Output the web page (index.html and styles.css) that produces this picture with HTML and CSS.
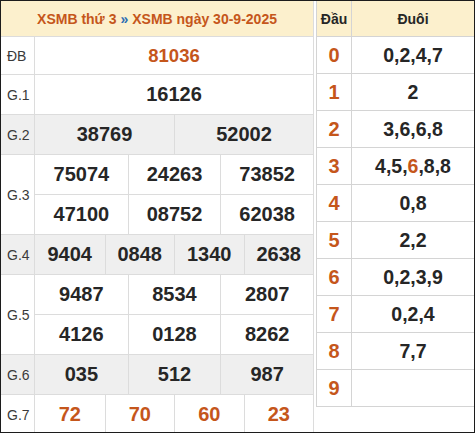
FILE: index.html
```html
<!DOCTYPE html>
<html lang="vi">
<head>
<meta charset="utf-8">
<title>XSMB</title>
<link rel="stylesheet" href="styles.css">
</head>
<body>
<div class="frame">
  <div class="results">
    <div class="res-head"><span class="or">XSMB thứ 3</span> <span class="raquo">»</span> <span class="or">XSMB ngày 30-9-2025</span></div>
    <div class="row r-db">
      <div class="lbl">ĐB</div>
      <div class="cells c1"><div class="cell num special">81036</div></div>
    </div>
    <div class="row">
      <div class="lbl">G.1</div>
      <div class="cells c1"><div class="cell num">16126</div></div>
    </div>
    <div class="row alt">
      <div class="lbl">G.2</div>
      <div class="cells c2"><div class="cell num">38769</div><div class="cell num">52002</div></div>
    </div>
    <div class="row double">
      <div class="lbl">G.3</div>
      <div class="cells c3">
        <div class="cell num">75074</div><div class="cell num">24263</div><div class="cell num">73852</div>
        <div class="cell num">47100</div><div class="cell num">08752</div><div class="cell num">62038</div>
      </div>
    </div>
    <div class="row alt">
      <div class="lbl">G.4</div>
      <div class="cells c4"><div class="cell num">9404</div><div class="cell num">0848</div><div class="cell num">1340</div><div class="cell num">2638</div></div>
    </div>
    <div class="row double">
      <div class="lbl">G.5</div>
      <div class="cells c3">
        <div class="cell num">9487</div><div class="cell num">8534</div><div class="cell num">2807</div>
        <div class="cell num">4126</div><div class="cell num">0128</div><div class="cell num">8262</div>
      </div>
    </div>
    <div class="row alt">
      <div class="lbl">G.6</div>
      <div class="cells c3"><div class="cell num">035</div><div class="cell num">512</div><div class="cell num">987</div></div>
    </div>
    <div class="row">
      <div class="lbl">G.7</div>
      <div class="cells c4"><div class="cell num or">72</div><div class="cell num or">70</div><div class="cell num or">60</div><div class="cell num or">23</div></div>
    </div>
  </div>
  <div class="loto">
    <div class="lrow lhead"><div class="dau">Đầu</div><div class="duoi">Đuôi</div></div>
    <div class="lrow"><div class="dau">0</div><div class="duoi">0,2,4,7</div></div>
    <div class="lrow"><div class="dau">1</div><div class="duoi">2</div></div>
    <div class="lrow"><div class="dau">2</div><div class="duoi">3,6,6,8</div></div>
    <div class="lrow"><div class="dau">3</div><div class="duoi">4,5,<span class="or">6</span>,8,8</div></div>
    <div class="lrow"><div class="dau">4</div><div class="duoi">0,8</div></div>
    <div class="lrow"><div class="dau">5</div><div class="duoi">2,2</div></div>
    <div class="lrow"><div class="dau">6</div><div class="duoi">0,2,3,9</div></div>
    <div class="lrow"><div class="dau">7</div><div class="duoi">0,2,4</div></div>
    <div class="lrow"><div class="dau">8</div><div class="duoi">7,7</div></div>
    <div class="lrow"><div class="dau">9</div><div class="duoi"></div></div>
  </div>
</div>
</body>
</html>
```

FILE: styles.css
```css
* { box-sizing: border-box; }
html, body { margin: 0; padding: 0; background: #fff; }
body { font-family: "Liberation Sans", Arial, sans-serif; color: #222; }

.frame {
  width: 475px;
  height: 433px;
  border: 1px solid #1c1c1c;
  overflow: hidden;
  display: flex;
  gap: 2px;
  align-items: flex-start;
}

.or { color: #c5561b; }
.raquo { color: #2c6db3; }

.results {
  width: 313px;
  flex: none;
  border-right: 1px solid #dcdcdc;
}

.res-head {
  height: 36px;
  background: #fcf0cd;
  border-bottom: 1px solid #dcdcdc;
  display: flex;
  align-items: center;
  justify-content: center;
  gap: 4px;
  font-weight: bold;
  font-size: 14px;
  white-space: pre;
}

.row {
  display: flex;
  height: 40px;
  border-bottom: 1px solid #dcdcdc;
}
.row.r-db { height: 38px; }
.row.double { height: 80px; }
.row.alt { background: #efefef; }

.lbl {
  width: 34px;
  flex: none;
  border-right: 1px solid #dcdcdc;
  display: flex;
  align-items: center;
  padding-left: 6px;
  font-size: 14px;
  color: #3a3a3a;
}

.cells {
  flex: 1;
  display: grid;
}
.c1 { grid-template-columns: 1fr; }
.c2 { grid-template-columns: repeat(2, 1fr); }
.c3 { grid-template-columns: repeat(3, 1fr); }
.c4 { grid-template-columns: repeat(4, 1fr); }
.double .cells { grid-template-rows: 1fr 1fr; }
.double .cell:nth-child(-n+3) { border-bottom: 1px solid #dcdcdc; }

.cell {
  display: flex;
  align-items: center;
  justify-content: center;
  border-left: 1px solid #dcdcdc;
}
.c1 .cell:first-child,
.c2 .cell:nth-child(2n+1),
.c3 .cell:nth-child(3n+1),
.c4 .cell:nth-child(4n+1) { border-left: none; }

.num {
  font-weight: bold;
  font-size: 20px;
  color: #262626;
}
.num.special { font-size: 18.5px; color: #c5561b; }
.num.or { color: #c5561b; }

.loto {
  flex: 1;
  border-left: 1px solid #d4d4d4;
}
.lrow {
  display: flex;
  height: 37px;
  border-bottom: 1px solid #d4d4d4;
}
.lrow.lhead {
  height: 36px;
  background: #fcf0cd;
}
.dau {
  width: 35px;
  flex: none;
  border-right: 1px solid #d4d4d4;
  display: flex;
  align-items: center;
  justify-content: center;
  font-weight: bold;
  font-size: 20px;
  color: #c5561b;
}
.duoi {
  flex: 1;
  display: flex;
  align-items: center;
  justify-content: center;
  font-weight: bold;
  font-size: 19.5px;
  color: #262626;
}
.lhead .dau, .lhead .duoi {
  font-size: 14px;
  color: #262626;
}
```
